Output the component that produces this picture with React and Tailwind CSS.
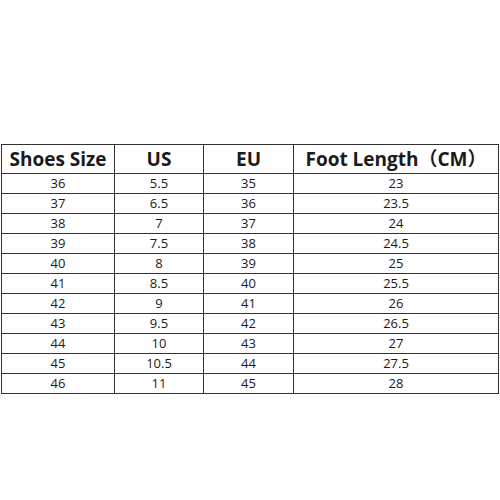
import React from "react";

const rows = [
  ["36", "5.5", "35", "23"],
  ["37", "6.5", "36", "23.5"],
  ["38", "7", "37", "24"],
  ["39", "7.5", "38", "24.5"],
  ["40", "8", "39", "25"],
  ["41", "8.5", "40", "25.5"],
  ["42", "9", "41", "26"],
  ["43", "9.5", "42", "26.5"],
  ["44", "10", "43", "27"],
  ["45", "10.5", "44", "27.5"],
  ["46", "11", "45", "28"],
];

export default function App() {
  return (
    <div
      className="w-[500px] h-[500px] bg-white pt-[144px] pl-[1px]"
      style={{ fontFamily: '"Open Sans", "Noto Sans CJK SC", sans-serif' }}
    >
      <table className="border-collapse w-[498px] text-[#1a1a1a] table-fixed">
        <colgroup>
          <col className="w-[113px]" />
          <col className="w-[89px]" />
          <col className="w-[90px]" />
          <col />
        </colgroup>
        <thead>
          <tr className="h-[29px]">
            <th className="border border-[#333] text-[19px] font-bold leading-none">Shoes Size</th>
            <th className="border border-[#333] text-[19px] font-bold leading-none">US</th>
            <th className="border border-[#333] text-[19px] font-bold leading-none">EU</th>
            <th className="border border-[#333] text-[19px] font-bold leading-none">Foot Length（CM）</th>
          </tr>
        </thead>
        <tbody>
          {rows.map((r) => (
            <tr key={r[0]} className="h-[20px]">
              {r.map((c, i) => (
                <td key={i} className="border border-[#333] text-center text-[13px] leading-none p-0">
                  {c}
                </td>
              ))}
            </tr>
          ))}
        </tbody>
      </table>
    </div>
  );
}
